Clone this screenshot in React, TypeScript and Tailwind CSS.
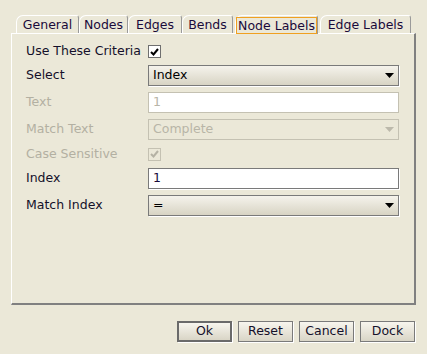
import React from 'react';

const font = { fontFamily: '"DejaVu Sans", Verdana, sans-serif' };

const tabs: [string, string][] = [
  ['General', 'w-[63px]'],
  ['Nodes', 'w-[49px]'],
  ['Edges', 'w-[54px]'],
  ['Bends', 'w-[51px]'],
  ['Node Labels', 'w-[83px]'],
  ['Edge Labels', 'w-[91px]'],
];

const Check = ({ disabled }: { disabled?: boolean }) => (
  <div
    className={`w-[13px] h-[13px] flex items-center justify-center border ${
      disabled ? 'border-[#c4c1b2] bg-[#ebe8d8]' : 'border-[#6f6f6f] bg-white'
    }`}
  >
    <svg width="9" height="8" viewBox="0 0 9 8">
      <path
        d="M1 4 L3.5 6.5 L8 1"
        fill="none"
        stroke={disabled ? '#b5b2a4' : '#000'}
        strokeWidth="2"
      />
    </svg>
  </div>
);

const Combo = ({ value, disabled }: { value: string; disabled?: boolean }) => (
  <div
    className={`flex-1 h-[21px] flex items-center justify-between pl-[4px] pr-[4px] border ${
      disabled
        ? 'border-[#c4c1b2] bg-[#ebe8d8] text-[#b8b5a7]'
        : 'border-[#7a7a7a] bg-gradient-to-b from-[#f5f3ec] to-[#d8d4c4] text-black shadow-[1px_1px_0_#fff]'
    }`}
  >
    <span>{value}</span>
    <svg width="9" height="5" viewBox="0 0 9 5">
      <path d="M0 0 H9 L4.5 5 Z" fill={disabled ? '#bcb9ab' : '#000'} />
    </svg>
  </div>
);

const Field = ({ value, disabled }: { value: string; disabled?: boolean }) => (
  <div
    className={`flex-1 h-[21px] flex items-center pl-[4px] bg-white border ${
      disabled ? 'border-[#c4c1b2] text-[#b8b5a7]' : 'border-[#7a7a7a] text-[#1a0a3a] shadow-[1px_1px_0_#fff]'
    }`}
  >
    {value}
  </div>
);

const Row = ({ label, disabled, h = 'h-[21px]', children }: { label: string; disabled?: boolean; h?: string; children: React.ReactNode }) => (
  <div className={`flex items-center ${h}`}>
    <div className={`w-[122px] shrink-0 ${disabled ? 'text-[#b3b0a2]' : 'text-[#14102a]'}`}>{label}</div>
    {children}
  </div>
);

export default function App() {
  return (
    <div className="w-[427px] h-[354px] bg-[#ebe8d8] text-[12.5px] relative overflow-hidden" style={font}>
      <div className="pt-[15px] pl-[11px]">
        <div className="flex pl-[5px] h-[18px] items-end">
          {tabs.map(([t, w]) => {
            const sel = t === 'Node Labels';
            return (
              <div
                key={t}
                className={`${w} shrink-0 h-[18px] flex items-center justify-center border-t border-l border-r rounded-tl-[7px] rounded-tr-[3px] border-t-white border-l-white border-r-[#9a9a9a] ${
                  sel ? 'bg-[#ebe8d8] -mb-px h-[19px] relative z-10 mx-[2px] w-[83px]' : ''
                }`}
              >
                <span
                  className={`text-[#1a0a3a] leading-[15px] px-[1px] whitespace-nowrap ${
                    sel ? 'outline outline-1 outline-[#f0a020]' : ''
                  }`}
                >
                  {t}
                </span>
              </div>
            );
          })}
        </div>
        <div className="w-[405px] h-[272px] border-t border-l border-t-white border-l-white border-r-2 border-b-2 border-r-[#808080] border-b-[#808080] pl-[14px] pr-[15px] pt-[10px] flex flex-col gap-[6px]">
          <Row label="Use These Criteria" h="h-[15px]">
            <Check />
          </Row>
          <Row label="Select">
            <Combo value="Index" />
          </Row>
          <Row label="Text" disabled>
            <Field value="1" disabled />
          </Row>
          <Row label="Match Text" disabled>
            <Combo value="Complete" disabled />
          </Row>
          <Row label="Case Sensitive" disabled h="h-[16px]">
            <Check disabled />
          </Row>
          <Row label="Index">
            <Field value="1" />
          </Row>
          <Row label="Match Index">
            <Combo value="=" />
          </Row>
        </div>
      </div>
      <div className="flex justify-end gap-[6px] pr-[12px] mt-[16px]">
        {['Ok', 'Reset', 'Cancel', 'Dock'].map((b) => (
          <div
            key={b}
            className={`w-[55px] h-[21px] flex items-center justify-center text-[#14102a] bg-gradient-to-b from-[#f7f5ee] to-[#d9d5c6] shadow-[1px_1px_0_#fff] ${
              b === 'Ok' ? 'border-2 border-[#6a6a6a]' : 'border border-[#7a7a7a]'
            }`}
          >
            {b}
          </div>
        ))}
      </div>
    </div>
  );
}
